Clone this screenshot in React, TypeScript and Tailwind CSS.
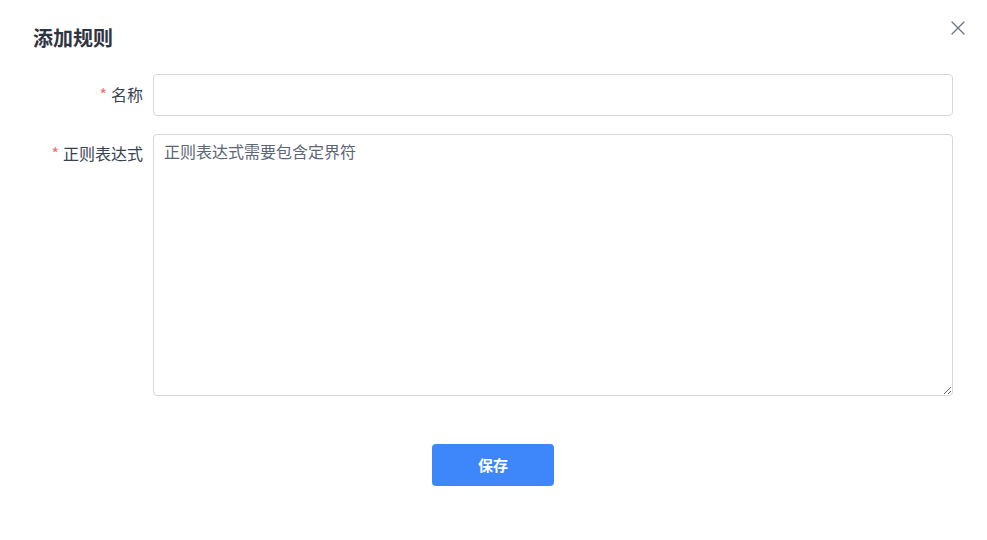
import React from "react";

export default function App() {
  return (
    <div
      className="relative w-[987px] h-[540px] bg-white"
      style={{ fontFamily: '"Noto Sans CJK SC", "Noto Sans", sans-serif' }}
    >
      <button className="absolute left-[951px] top-[21px] w-[14px] h-[14px] flex items-center justify-center">
        <svg width="14" height="14" viewBox="0 0 14 14" fill="none">
          <path d="M1 1L13 13M13 1L1 13" stroke="#6b7280" strokeWidth="1.3" strokeLinecap="round" />
        </svg>
      </button>
      <div className="pl-[33px] pr-[34px] pt-[24px]">
        <h2 className="text-[20px] leading-[28px] font-bold text-[#2f3441]">添加规则</h2>
        <div className="mt-[22px] flex items-center">
          <label className="w-[120px] shrink-0 pr-[10px] pb-[2px] text-right text-[16px] text-[#374151]">
            <span className="text-[#f56c6c] mr-[4px]">*</span>名称
          </label>
          <input
            className="flex-1 h-[42px] rounded-[4px] border border-[#d4d7e3] px-[11px] text-[16px] outline-none"
          />
        </div>
        <div className="mt-[18px] flex items-start">
          <label className="w-[120px] shrink-0 pr-[10px] pt-[8px] text-right text-[16px] leading-[22px] text-[#374151]">
            <span className="text-[#f56c6c] mr-[4px]">*</span>正则表达式
          </label>
          <textarea
            className="flex-1 h-[262px] rounded-[4px] border border-[#d4d7e3] px-[10px] pt-[5px] pb-[7px] text-[16px] leading-[22px] outline-none placeholder:text-[#5c6676]"
            placeholder="正则表达式需要包含定界符"
          />
        </div>
        <div className="mt-[48px] flex justify-center">
          <button className="w-[122px] h-[42px] rounded-[4px] bg-[#3d87fb] text-white text-[15px] font-bold">
            保存
          </button>
        </div>
      </div>
    </div>
  );
}
